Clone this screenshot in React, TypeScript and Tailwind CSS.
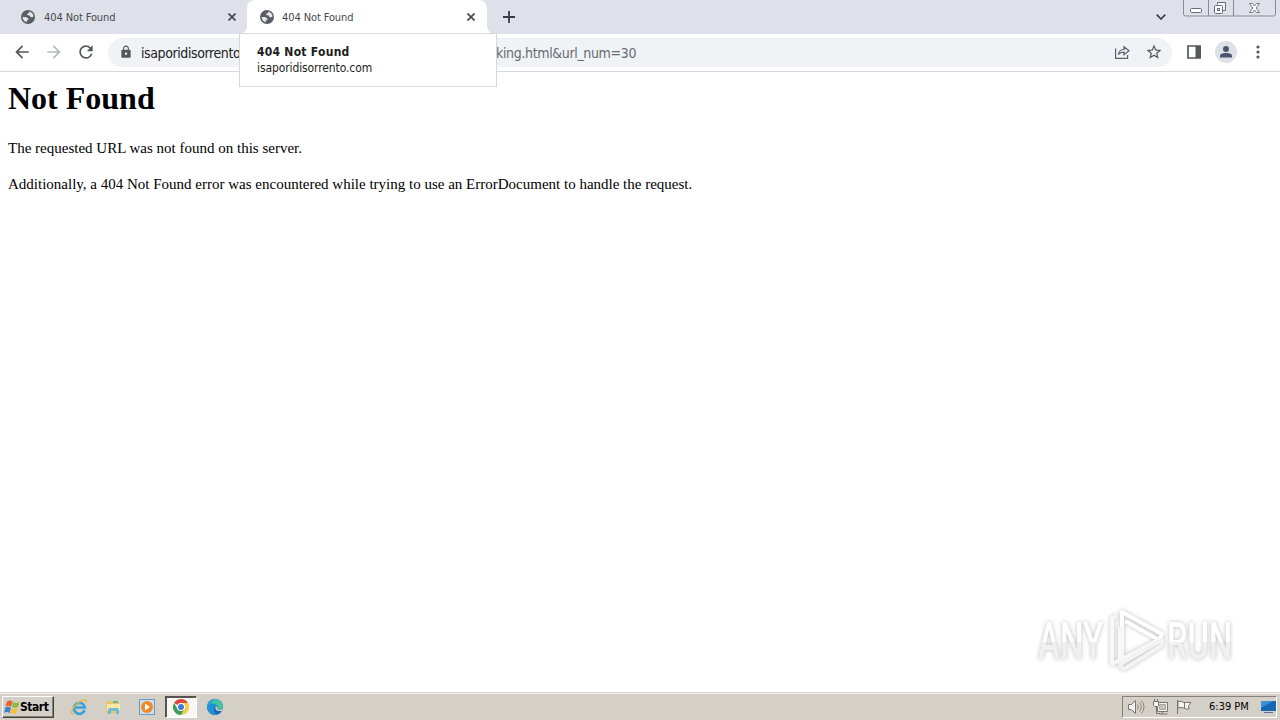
import type { ReactNode } from "react";
import { MdArrowBack, MdArrowForward, MdLock, MdRefresh, MdStarBorder } from "react-icons/md";

const UI_FONT = "font-['DejaVu_Sans_Condensed','DejaVu_Sans',sans-serif]";

function GlobeIcon() {
  return (
    <svg viewBox="0 0 14 14" className="h-[14px] w-[14px] shrink-0">
      <circle cx="7" cy="7" r="7" fill="#5a5d62" />
      <path d="M1.600 7h3.200l2.400 1.300.3 1.500-1.700.6v1.900C3.300 11.700 1.700 9.600 1.600 7Z" fill="#e4e6eb" />
      <path d="M8.200 1.600c2.500.5 4.200 2.500 4.300 5-.8 1-2.300 1-3.200.1L8.600 5.500l-2.500-.4.3-1.600 1.600-.3Z" fill="#e4e6eb" />
    </svg>
  );
}

function CloseIcon() {
  return (
    <svg viewBox="0 0 8 8" className="h-2 w-2 shrink-0">
      <path d="m.5.5 7 7m0-7-7 7" stroke="#45484d" strokeWidth="1.7" />
    </svg>
  );
}

function Tab({ active = false }: { active?: boolean }) {
  return (
    <div className={`relative flex h-[34px] items-center pl-[13px] ${active ? "w-[240px] rounded-t-lg bg-white pr-3" : "w-[239px] pr-[11px]"}`}>
      {active && (
        <>
          <svg viewBox="0 0 8 8" className="absolute bottom-0 -left-2 h-2 w-2">
            <path d="M8 0v8H0a8 8 0 0 0 8-8Z" fill="#fff" />
          </svg>
          <svg viewBox="0 0 8 8" className="absolute -right-2 bottom-0 h-2 w-2">
            <path d="M0 0v8h8a8 8 0 0 1-8-8Z" fill="#fff" />
          </svg>
        </>
      )}
      <GlobeIcon />
      <span className={`flex-1 pt-[2px] text-[11px] tracking-[-0.1px] text-[#45484d] ${active ? "ml-2" : "ml-[9px]"}`}>404 Not Found</span>
      <CloseIcon />
    </div>
  );
}

function WindowControls() {
  return (
    <svg viewBox="0 0 94 18" className="h-[18px] w-[94px]" fill="none">
      <path d="M.5 0v14q0 2 2 2h88q2 0 2-2V0M25.500 0v16M50.500 0v16" stroke="#888b93" />
      <rect x="7.500" y="8.500" width="11" height="4" rx="1" fill="#fff" stroke="#686c76" />
      <path d="M34.500 4.500V2.500h8v8h-3" fill="#f5f6f9" stroke="#686c76" />
      <rect x="31.500" y="5.500" width="8" height="8" rx="1" fill="#fff" stroke="#686c76" />
      <rect x="34.500" y="8.500" width="2" height="2" stroke="#686c76" />
      <path d="M66.500 3.500h3l2 2.500 2-2.500h3l-3.300 4.500 3.300 4.500h-3l-2-2.500-2 2.500h-3L69.800 8Z" fill="#fff" stroke="#777b84" />
    </svg>
  );
}

function TabStrip() {
  return (
    <header className="flex h-[34px] bg-[#dee1e9] pl-2">
      <Tab />
      <Tab active />
      <svg viewBox="0 0 12 12" className="mt-[11px] ml-4 h-3 w-3">
        <path d="M6 0v12M0 6h12" stroke="#3a3c43" strokeWidth="1.800" />
      </svg>
      <svg viewBox="0 0 10 6" className="mt-[14px] ml-auto h-[6px] w-[10px]" fill="none">
        <path d="m.7.7 4.300 4.300L9.300.7" stroke="#3e4046" strokeWidth="1.700" />
      </svg>
      <div className="ml-[17px] w-[97px]">
        <WindowControls />
      </div>
    </header>
  );
}

function Toolbar() {
  return (
    <div className="flex h-[38px] items-center border-b border-[#d6d8dc] bg-white pb-px text-[#54575c]">
      <MdArrowBack className="ml-3 h-5 w-5" />
      <MdArrowForward className="ml-3 h-5 w-5 text-[#b7b9bc]" />
      <MdRefresh className="ml-3 h-5 w-5" />
      <div className="ml-3 flex h-[29px] w-[1064px] items-center rounded-full bg-[#f0f3f6] pr-[9px] pl-[11px]">
        <MdLock className="h-[14px] w-[14px] shrink-0" />
        <div className="ml-2 flex flex-1 pt-[2px] text-[14px] whitespace-nowrap">
          <span className="w-[355px] tracking-[-0.4px] text-[#202124]">isaporidisorrento</span>
          <span className="tracking-[-0.35px] text-[#676b70]">king.html&amp;url_num=30</span>
        </div>
        <svg viewBox="0 0 16 16" className="h-4 w-4" fill="none" stroke="#5c5f64" strokeWidth="1.200">
          <path d="M1.600 4.500v9.900h12V11" />
          <path d="M4.500 10.500c.5-4 2.500-5 5.500-5V2.800l5 4-5 4V8.200c-2.500 0-4.200.5-5.500 2.300Z" />
        </svg>
        <MdStarBorder className="ml-[15px] h-[18px] w-[18px]" />
      </div>
      <svg viewBox="0 0 14 14" className="ml-[15px] h-[14px] w-[14px]">
        <path d="M1 1h12v12H1Z" fill="none" stroke="#55575b" strokeWidth="1.700" />
        <path d="M8.500 1H14v12H8.500Z" fill="#55575b" />
      </svg>
      <svg viewBox="0 0 22 22" className="ml-[14px] h-[22px] w-[22px]">
        <circle cx="11" cy="11" r="11" fill="#dce0e7" />
        <circle cx="11" cy="8" r="3" fill="#4c536f" />
        <path d="M5 16.500v-1.800C5 12.500 9 12 11 12s6 .5 6 2.700v1.800Z" fill="#4c536f" />
      </svg>
      <svg viewBox="0 0 4 14" className="ml-[19px] h-[14px] w-1" fill="#55575b">
        <circle cx="2" cy="2" r="1.600" />
        <circle cx="2" cy="7" r="1.600" />
        <circle cx="2" cy="12" r="1.600" />
      </svg>
    </div>
  );
}

function TabTooltip() {
  return (
    <div className="absolute top-[33px] left-[239px] h-[54px] w-[258px] border border-[#d6d7da] bg-white pt-[10px] pl-[17px] leading-4 text-[#1c1d20]">
      <p className="text-[12px] font-bold tracking-[0.27px]">404 Not Found</p>
      <p className="text-[12px] tracking-[-0.1px]">isaporidisorrento.com</p>
    </div>
  );
}

function Watermark() {
  return (
    <svg viewBox="0 0 230 80" className="absolute top-[600px] left-[1020px] h-20 w-[230px] drop-shadow-[0_0_2px_#bdbdbd]">
      <defs>
        <linearGradient id="letters" gradientUnits="userSpaceOnUse" x1="0" y1="-38" x2="0" y2="2">
          <stop offset=".52" stopColor="#ffffff" />
          <stop offset=".52" stopColor="#f0f0f0" />
        </linearGradient>
      </defs>
      <g fontFamily="Roboto, sans-serif" fontSize="51" fontWeight="500" fill="url(#letters)">
        <text transform="translate(18 59) scale(.64 1)" textLength="102" lengthAdjust="spacingAndGlyphs">ANY</text>
        <text transform="translate(147 59) scale(.64 1)" textLength="102" lengthAdjust="spacingAndGlyphs">RUN</text>
      </g>
      <g fill="none" strokeWidth="4" strokeLinejoin="round">
        <path d="M97 16l-5 2v46l8-4V27" stroke="#f8f8f8" />
        <path d="M102 28V12l40 22-3 6-34-19" stroke="#fff" />
        <path d="M102 26v33l36-19" stroke="#f7f7f7" />
        <path d="M99 65l43-25v5l-38 24-5-4" stroke="#f3f3f3" />
      </g>
    </svg>
  );
}

function StartFlag() {
  return (
    <svg viewBox="0 0 16 16" className="h-4 w-4">
      <path d="M3 2.500q3-2 5.500 0L7 8Q5 6 1.500 7Z" fill="#e8602c" />
      <path d="M9 3q3 2 6.500 0L14 8q-3 1.500-6 0Z" fill="#8aba3c" />
      <path d="M1.500 8q3-1 5.500 1l-1.500 5q-3-2-5.500 0Z" fill="#3d82c9" />
      <path d="M8 9q3 2 6 0l-1.500 5q-3 1.500-6 0Z" fill="#f3bf35" />
    </svg>
  );
}

function ExplorerIcon() {
  return (
    <svg viewBox="0 0 18 18" className="h-[18px] w-[18px]" fill="none">
      <path d="M14.700 12A5.500 5.500 0 1 1 14.900 9.500H5" stroke="#3aa3de" strokeWidth="2.700" />
      <path d="M3 15.500C-.5 17 2 9.500 8 5c5-4 9.500-4 8-.5" stroke="#e7b83c" strokeWidth="1.400" />
    </svg>
  );
}

function FolderIcon() {
  return (
    <svg viewBox="0 0 18 18" className="h-[18px] w-[18px]">
      <path d="M2 3h5l1 2h7v10H2Z" fill="#e9c766" />
      <path d="M3 6h13v7H3Z" fill="#f8e7a5" />
      <path d="M4 16v-4q0-2 2-2h7q2 0 2 2v4h-3v-3H7v3Z" fill="#6eb8dc" />
      <path d="M9 4h5" stroke="#58a85b" strokeWidth="1.500" />
    </svg>
  );
}

function MediaIcon() {
  return (
    <svg viewBox="0 0 18 18" className="h-[18px] w-[18px]">
      <rect x="1.500" y="1.500" width="15" height="15" fill="#cadff0" stroke="#6a9bc7" />
      <circle cx="9" cy="9" r="6" fill="#f08a24" />
      <path d="m7 5.500 5 3.500-5 3.500Z" fill="#fff" />
    </svg>
  );
}

function ChromeIcon() {
  return (
    <svg viewBox="0 0 16 16" className="h-4 w-4">
      <path d="M8 8 1.070 4A8 8 0 0 1 14.930 4H8Z" fill="#dc4938" />
      <path d="M8 4h6.930A8 8 0 0 1 8 16l3.500-6Z" fill="#f8cc43" />
      <path d="M1.070 4 4.500 10 8 12l3.500-2L8 16A8 8 0 0 1 1.070 4Z" fill="#3d9c55" />
      <circle cx="8" cy="8" r="4" fill="#fff" />
      <circle cx="8" cy="8" r="3" fill="#3b7bd9" />
    </svg>
  );
}

function EdgeIcon() {
  return (
    <svg viewBox="0 0 16 16" className="h-4 w-4">
      <circle cx="8" cy="8" r="8" fill="#1569b5" />
      <path d="M0 8C1-2 15-2 16 7c0 4-4 4-6 3 2-5-5-7-10-2Z" fill="#43c3a0" />
      <path d="M0 8C1 3 4 0 8 0L3 5Z" fill="#259fd8" />
      <path d="M0 8c3-5 9-4 9-1-3 1-3 6 1 8.500C5 17 0 13 0 8Z" fill="#2090d8" />
      <path d="M9 7c-2 3 1 6 6 4.800L16 9.500C13.500 11 10.500 11 10 9.500Q10.500 7.500 9 7Z" fill="#d4d0c8" />
    </svg>
  );
}

function TrayIcons() {
  return (
    <svg viewBox="0 0 66 18" className="h-[18px] w-[66px]" fill="#f5f4f1" stroke="#77756f">
      <path d="M1.500 6.500h3l4-4v13l-4-4h-3Z" />
      <path d="M10.500 6.500q1.500 2.500 0 5M12.500 4.500q3.500 4.500 0 9M14.500 2.500q5 6.500 0 13" fill="none" strokeWidth=".8" />
      <path d="M30.500 4.500h10v9h-10Z" />
      <path d="M32.500 6.500h6v5h-6Z" fill="#c4c1bb" stroke="#aaa7a1" />
      <path d="M26.500 3.500h5v4l-1 1h-3l-1-1ZM27.500 1v2m3-2v2" />
      <path d="M29.500 8.500v7h4m2-2v2m-3 .5h8" fill="none" />
      <path d="M50.500 2v14" />
      <path d="M51 3.500q3-1 6 1h7l-2.500 3 .5 3.500q-3 .5-5-1-3-1-6 0Z" />
      <path d="M57.500 4.500V10" />
    </svg>
  );
}

function TaskItem({ children }: { children: ReactNode }) {
  return <div className="flex h-[22px] w-[34px] items-center justify-center">{children}</div>;
}

function Taskbar() {
  return (
    <footer className="flex h-7 items-center border-t border-[#d8d5ce] bg-[#d4d0c8] pr-[3px] shadow-[inset_0_1px_0_#f5f4f1]">
      <div className="ml-[2px] flex h-[22px] w-[52px] items-center border border-t-white border-r-[#454340] border-b-[#454340] border-l-white pl-px text-[12px] font-bold text-black shadow-[inset_-1px_-1px_0_#858279]">
        <StartFlag />
        <span className="tracking-[-0.45px]">Start</span>
      </div>
      <div className="ml-2 flex">
        <TaskItem><ExplorerIcon /></TaskItem>
        <TaskItem><FolderIcon /></TaskItem>
        <TaskItem><MediaIcon /></TaskItem>
        <div className="ml-px flex h-[22px] w-8 items-center justify-center border border-t-[#56534e] border-r-white border-b-white border-l-[#56534e] bg-[#f8f7f5] shadow-[inset_1px_1px_0_#56534e]">
          <ChromeIcon />
        </div>
        <div className="ml-px">
          <TaskItem><EdgeIcon /></TaskItem>
        </div>
      </div>
      <div className="ml-auto flex h-[22px] w-[155px] items-center border border-t-[#85827b] border-r-white border-b-white border-l-[#85827b] pl-1">
        <TrayIcons />
        <span className="ml-4 pt-[2px] text-[11px] whitespace-nowrap text-black">6:39 PM</span>
        <svg viewBox="0 0 16 14" className="ml-auto h-[14px] w-4 shrink-0">
          <path d="M1 1h15v10H1Z" fill="#1767b5" />
          <path d="m1 1 12 0-12 7Z" fill="#3f91d5" />
          <path d="M4 12h9v1H4Z" fill="#5c718b" />
        </svg>
      </div>
    </footer>
  );
}

export default function App() {
  return (
    <div className={`relative flex h-[720px] w-[1280px] flex-col overflow-hidden bg-white ${UI_FONT}`}>
      <TabStrip />
      <Toolbar />
      <main className="flex-1 px-2 pt-2 font-['Liberation_Serif',serif] text-[15px] leading-[18px] text-black">
        <h1 className="text-[32px] leading-[37px] font-bold">Not Found</h1>
        <p className="mt-[22px]">The requested URL was not found on this server.</p>
        <p className="mt-[18px]">Additionally, a 404 Not Found error was encountered while trying to use an ErrorDocument to handle the request.</p>
      </main>
      <Taskbar />
      <TabTooltip />
      <Watermark />
    </div>
  );
}
